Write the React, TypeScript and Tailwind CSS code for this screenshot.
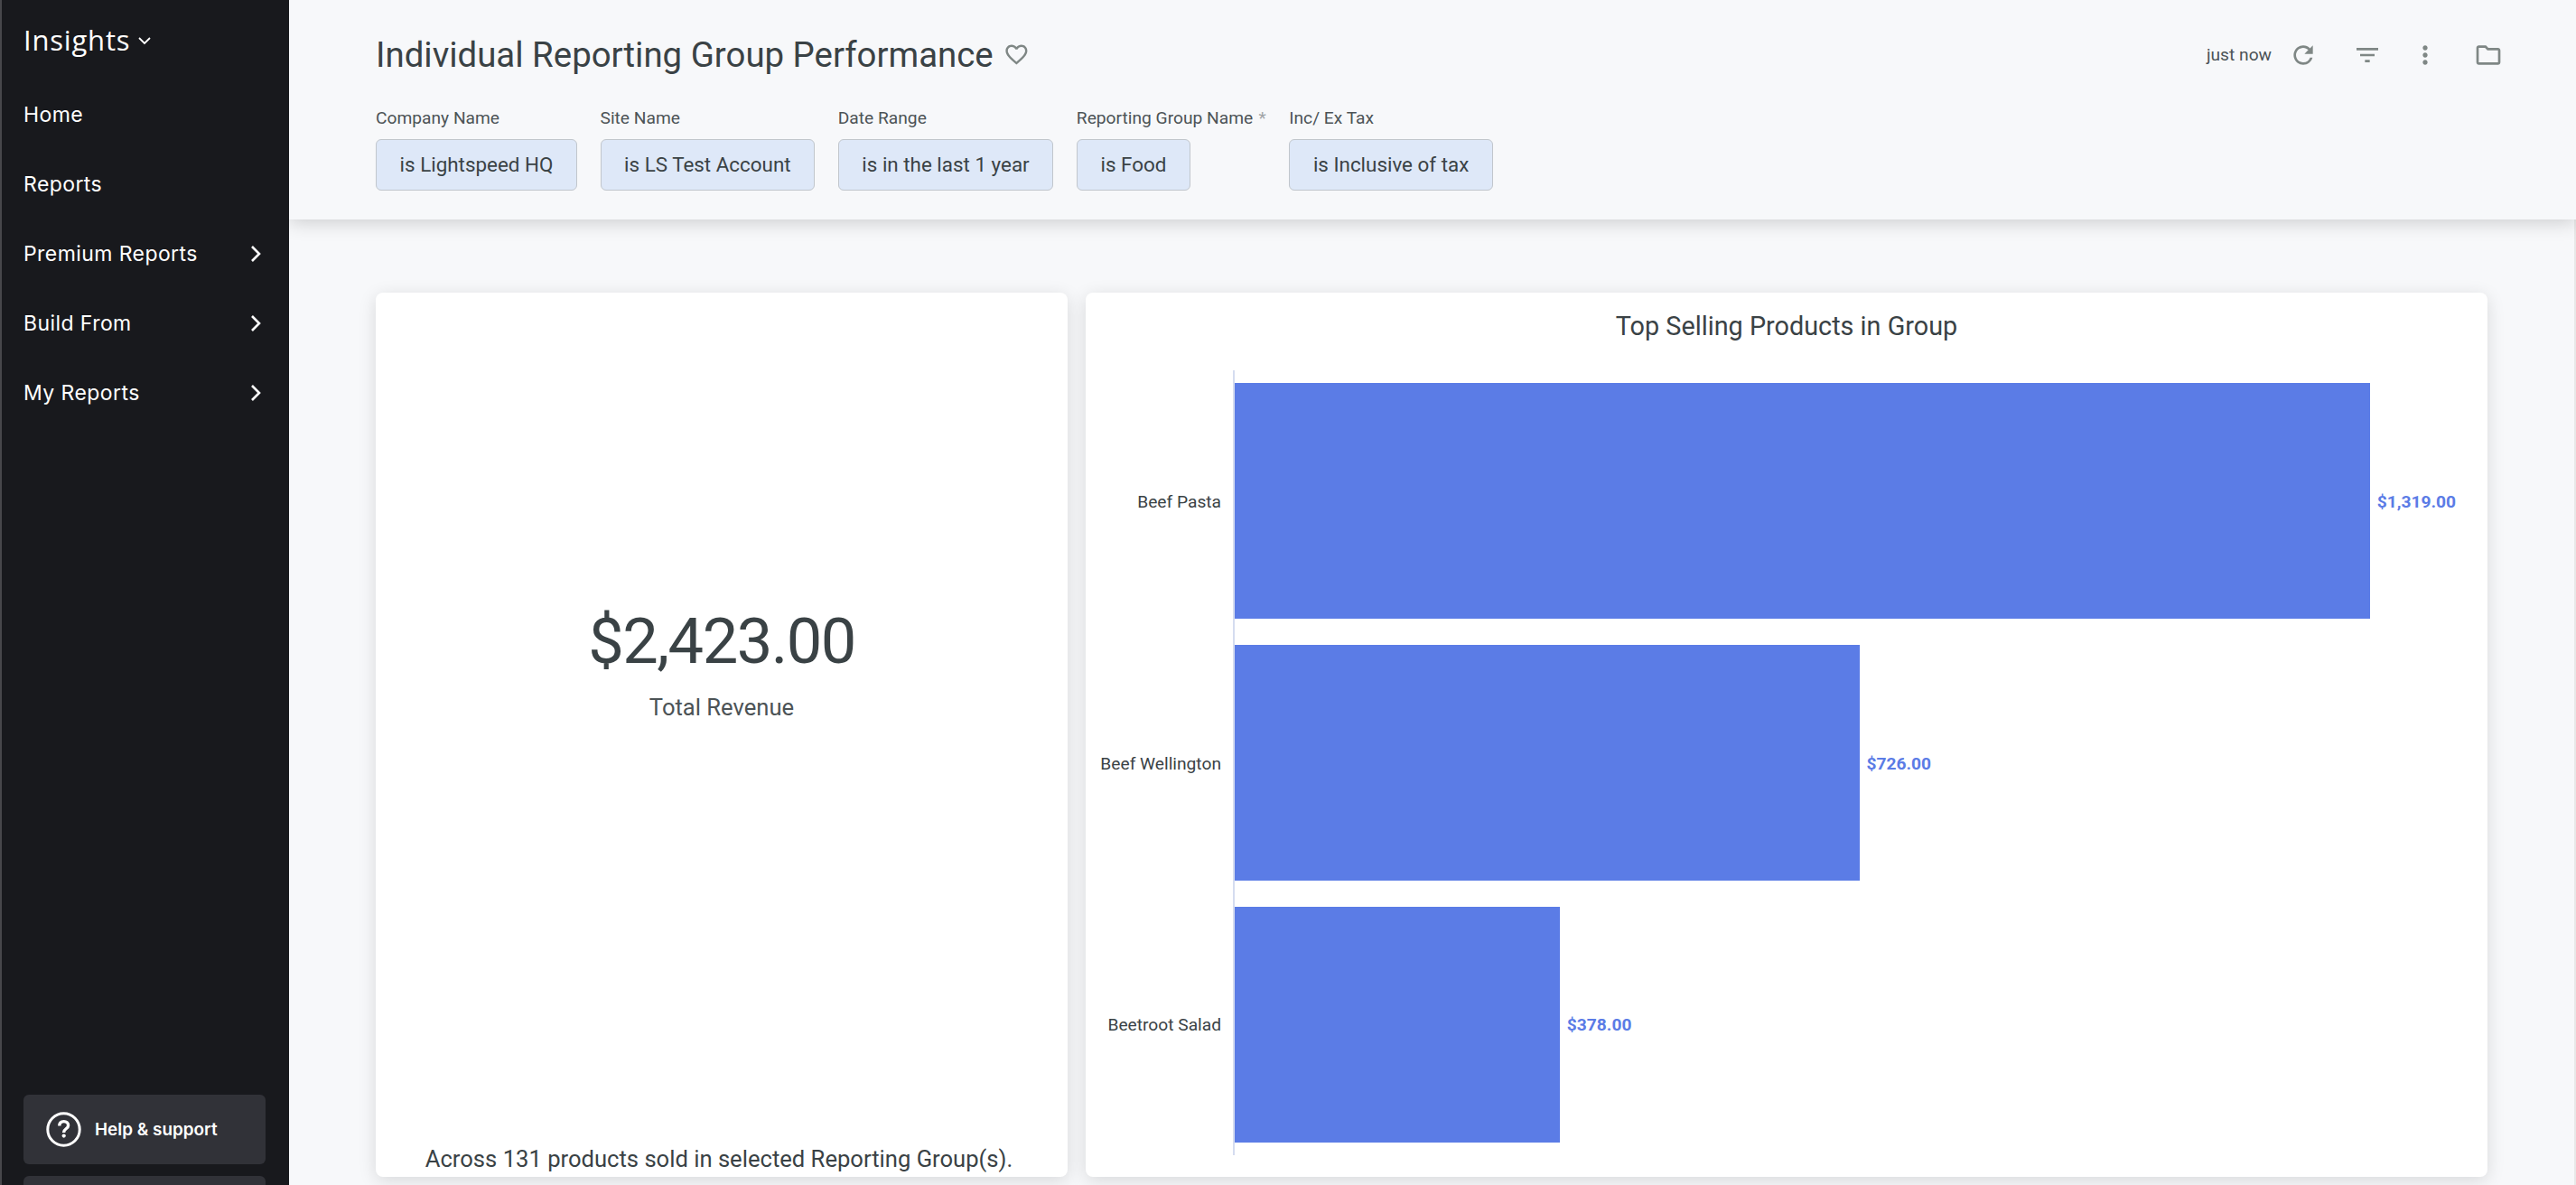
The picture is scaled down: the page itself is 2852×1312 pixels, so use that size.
import { MdFavoriteBorder, MdFilterList, MdMoreVert, MdOutlineFolder, MdRefresh } from "react-icons/md";

const navItems = [
  { name: "Home", hasChildren: false },
  { name: "Reports", hasChildren: false },
  { name: "Premium Reports", hasChildren: true },
  { name: "Build From", hasChildren: true },
  { name: "My Reports", hasChildren: true },
];

const filters = [
  { label: "Company Name", value: "is Lightspeed HQ", required: false },
  { label: "Site Name", value: "is LS Test Account", required: false },
  { label: "Date Range", value: "is in the last 1 year", required: false },
  { label: "Reporting Group Name", value: "is Food", required: true },
  { label: "Inc/ Ex Tax", value: "is Inclusive of tax", required: false },
];

const products = [
  { name: "Beef Pasta", value: 1319, text: "$1,319.00" },
  { name: "Beef Wellington", value: 726, text: "$726.00" },
  { name: "Beetroot Salad", value: 378, text: "$378.00" },
];

// pixels per dollar on the chart's value axis
const SCALE = 0.9532;

function Sidebar() {
  return (
    <nav className="relative z-10 flex h-full w-[320px] shrink-0 flex-col border-l-2 border-[#47474b] bg-[#18191d] font-[Inter,sans-serif] text-white">
      <button type="button" className="flex h-[88px] items-center pt-px pl-6 text-left">
        <span className="font-['Open_Sans',sans-serif] text-[31px] leading-none tracking-[0.8px]">Insights</span>
        <svg className="ml-2" width="16" height="10" viewBox="0 0 16 10" fill="none" stroke="currentColor" strokeWidth="1.8">
          <path d="M2 2l6 6 6-6" />
        </svg>
      </button>

      <ul>
        {navItems.map((item) => (
          <li key={item.name} className="flex h-[77px] items-center justify-between pr-[30px] pl-6">
            <span className="pt-0.5 text-[23px] tracking-[0.42px]">{item.name}</span>
            {item.hasChildren && (
              <svg width="14" height="20" viewBox="0 0 14 20" fill="none" stroke="currentColor" strokeWidth="2.6">
                <path d="M3 2l8 8-8 8" />
              </svg>
            )}
          </li>
        ))}
      </ul>

      <div className="mt-auto h-[100px] overflow-hidden pr-[26px] pl-6">
        <button type="button" className="flex h-[77px] w-full items-center rounded-md bg-[#313238] pl-[25px]">
          <svg width="39" height="39" viewBox="0 0 39 39" fill="none" stroke="currentColor" strokeWidth="3">
            <circle cx="19.5" cy="19.5" r="17.7" />
            <path d="M14.8 15.6c0-3.2 2-5 4.9-5 2.8 0 4.9 1.6 4.9 4.3 0 3.9-4.9 3.8-4.9 7.6v.6" strokeWidth="3.4" />
            <circle cx="19.7" cy="26.6" r="2.1" fill="currentColor" stroke="none" />
          </svg>
          <span className="ml-[15px] pt-0.5 text-[18.9px] font-semibold">Help &amp; support</span>
        </button>
        <div className="mt-[13px] h-[77px] rounded-md bg-[#313238]"></div>
      </div>
    </nav>
  );
}

function Header() {
  return (
    <header className="relative h-[243px] shrink-0 bg-[#f7f8fa] pt-9 pl-24 shadow-[0_3px_20px_rgba(0,0,0,0.18)]">
      <div className="flex h-12 items-center pr-[81px] text-[#7f8785]">
        <h1 className="pt-0.5 text-[38.4px] text-[#3a4245]">Individual Reporting Group Performance</h1>
        <MdFavoriteBorder className="ml-[11px] text-[28.8px]" />
        <span className="ml-auto pt-0.5 text-[19.2px] text-[#4c5356]">just now</span>
        <MdRefresh className="mt-0.5 ml-[19px] text-[32px]" />
        <MdFilterList className="mt-0.5 ml-[39px] text-[32px]" />
        <MdMoreVert className="mt-0.5 ml-8 text-[32px]" />
        <MdOutlineFolder className="mt-0.5 ml-[38px] text-[32px]" />
      </div>

      <div className="mt-[35px] flex gap-[25.6px]">
        {filters.map((filter) => (
          <div key={filter.label} className="flex flex-col items-start">
            <label className="h-6 text-[19.2px] leading-6 text-[#4c5356]">
              {filter.label}
              {filter.required && <span className="ml-[1.5px] text-[#a0a4a6]"> *</span>}
            </label>
            <button
              type="button"
              className="mt-[11px] h-[57px] rounded-md border border-[#c1c6cc] bg-[#dee8f8] px-[25.6px] text-[22.4px] text-[#3a4245]"
            >
              {filter.value}
            </button>
          </div>
        ))}
      </div>
    </header>
  );
}

function RevenueCard() {
  return (
    <section className="flex w-[766px] flex-col items-center rounded-lg bg-white pt-[346px] pb-1 shadow-[0_4px_19px_rgba(0,0,0,0.13)]">
      <div className="h-20 text-[70.4px] leading-[80px] tracking-[-1.55px] text-[#3a4245]">$2,423.00</div>
      <div className="mt-[17px] h-8 text-[25.6px] leading-8 text-[#4c5356]">Total Revenue</div>
      <p className="mt-auto h-8 pr-[6px] text-[25.6px] leading-8 text-[#3a4245]">
        Across 131 products sold in selected Reporting Group(s).
      </p>
    </section>
  );
}

function ProductsCard() {
  return (
    <section className="w-[1552px] rounded-lg bg-white pt-[17px] shadow-[0_4px_19px_rgba(0,0,0,0.13)]">
      <h2 className="h-10 text-center text-[28.8px] leading-10 text-[#3a4245]">Top Selling Products in Group</h2>

      <div className="mt-[29px] flex h-[869px] text-[19.2px] text-[#3a4245]">
        <div className="flex w-[163px] flex-col pr-[13px] text-right">
          {products.map((product) => (
            <div key={product.name} className="flex flex-1 items-center justify-end pt-[3px]">
              {product.name}
            </div>
          ))}
        </div>
        <div className="flex flex-1 flex-col border-l-2 border-[#d5dcf0]">
          {products.map((product) => (
            <div key={product.name} className="flex flex-1 items-center">
              <div className="h-[260.7px] bg-[#5b7ce6]" style={{ width: product.value * SCALE }}></div>
              <span className="mt-[3px] ml-[7.5px] font-bold text-[#5b7ce6]">{product.text}</span>
            </div>
          ))}
        </div>
      </div>
    </section>
  );
}

export default function App() {
  return (
    <div className="flex h-[1312px] w-full overflow-hidden bg-[#f7f8fa] font-[Roboto,sans-serif]">
      <Sidebar />
      <div className="flex min-w-0 flex-1 flex-col">
        <Header />
        <main className="flex flex-1 gap-5 border-r-2 border-[#e8e8e8] pt-[81px] pb-[9px] pl-24">
          <RevenueCard />
          <ProductsCard />
        </main>
      </div>
    </div>
  );
}
